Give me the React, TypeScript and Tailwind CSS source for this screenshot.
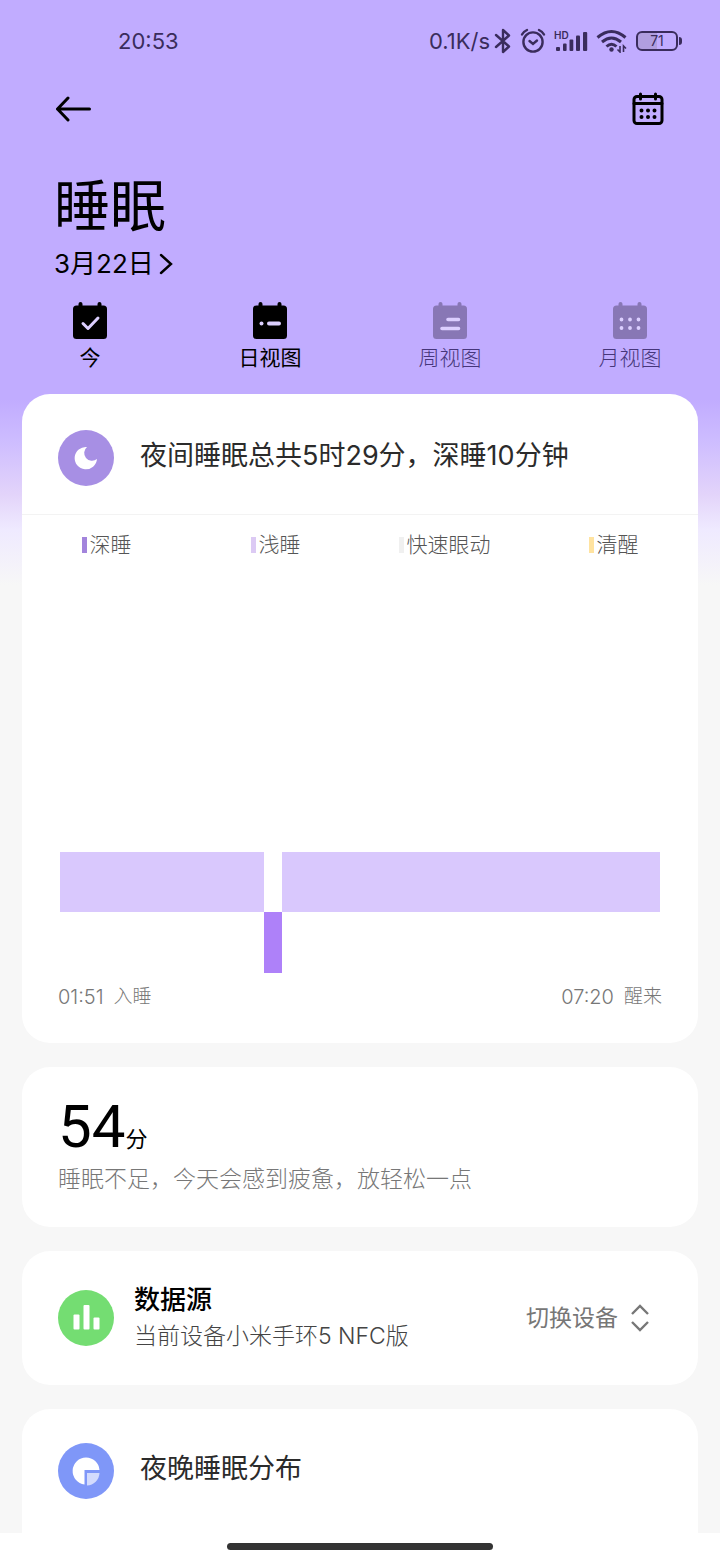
import React from 'react';

interface Tab {
  label: string;
  active: boolean;
  mark: React.ReactNode;
}

const TABS: Tab[] = [
  {
    label: '今',
    active: true,
    mark: <path d="M11 21.500l5 5 10-10.500" strokeWidth="3" />,
  },
  {
    label: '日视图',
    active: true,
    mark: (
      <>
        <path d="M9.5 21.5h.01" strokeWidth="4" />
        <path d="M17 21.5h10" strokeWidth="4" />
      </>
    ),
  },
  {
    label: '周视图',
    active: false,
    mark: <path d="M16 17.5h10.5M10 26.5h16.500" strokeWidth="3.6" />,
  },
  {
    label: '月视图',
    active: false,
    mark: (
      <path
        d="M9.500 17.500h.01M18 17.500h.01M26.500 17.500h.01M9.500 26h.01M18 26h.01M26.500 26h.01"
        strokeWidth="3.8"
      />
    ),
  },
];

const LEGEND = [
  { label: '深睡', color: 'bg-[#a284dc]' },
  { label: '浅睡', color: 'bg-[#dccaf4]' },
  { label: '快速眼动', color: 'bg-[#f0f0f0]' },
  { label: '清醒', color: 'bg-[#ffe3a0]' },
];

// start and length in minutes after falling asleep
const TOTAL_MINUTES = 329;
const STAGES = [
  { start: 0, length: 112, deep: false },
  { start: 112, length: 10, deep: true },
  { start: 122, length: 207, deep: false },
];

const StatusBar = () => (
  <div className="flex h-[82px] items-center justify-between pl-[118px] pr-[38px] text-[#3a2c5c]">
    <span className="text-[22px] leading-7">20:53</span>
    <div className="flex items-center gap-2">
      <div className="flex items-center gap-1">
        <span className="text-[22px] leading-7">0.1K/s</span>
        <svg width="18" height="26" viewBox="0 0 18 26" fill="none" stroke="currentColor" strokeWidth="2.4" strokeLinejoin="round" strokeLinecap="round">
          <path d="M2 7l13 11.500L9 24V2l6 5.500L2 19" />
        </svg>
      </div>
      <svg width="26" height="26" viewBox="0 0 26 26" fill="none" stroke="currentColor" strokeWidth="2.4" strokeLinecap="round">
        <circle cx="13" cy="14" r="9.600" />
        <path d="M9.500 13l3.500 3 4-3.500M2 6.500Q3.500 3.500 7 2M24 6.500Q22.500 3.500 19 2" />
      </svg>
      <div className="relative h-6 w-[34px]">
        <span className="absolute left-0 top-0 text-[10px] font-semibold leading-3">HD</span>
        <svg className="h-6 w-full" viewBox="0 0 34 24" fill="currentColor">
          <rect x="2" y="18" width="4" height="4" rx="1" />
          <rect x="9" y="14.500" width="3.600" height="7.500" rx="1" />
          <rect x="15.500" y="10.500" width="3.800" height="11.500" rx="1" />
          <rect x="22" y="6.500" width="4" height="15.500" rx="1" />
          <rect x="29" y="3" width="4.200" height="19" rx="1" />
        </svg>
      </div>
      <svg width="32" height="24" viewBox="0 0 32 24" fill="none" stroke="currentColor" strokeWidth="3">
        <path d="M1.500 8.500Q15.500-3.500 29.500 8.500M6 13Q15.500 5 25 13M10.500 17.500Q15.500 13 20.500 17.500" />
        <circle cx="15.500" cy="20.500" r="2.200" fill="currentColor" stroke="none" />
        <path d="M24 17v6l-2.500-2.500M27.500 23v-6l2.500 2.500" strokeWidth="1.600" />
      </svg>
      <div className="flex items-center gap-px">
        <span className="flex h-5 w-[42px] items-center justify-center rounded-md border-2 border-current bg-linear-to-r from-[#b09edf] from-50% to-transparent to-50% text-[14px] leading-4">
          71
        </span>
        <span className="h-2 w-[3px] rounded-r bg-current" />
      </div>
    </div>
  </div>
);

const CalendarIcon = () => (
  <svg width="32" height="34" viewBox="0 0 32 34" fill="none" stroke="currentColor" strokeWidth="3" strokeLinecap="round">
    <rect x="2" y="4.500" width="28" height="27" rx="3" />
    <path d="M2 11.500h28M8.500 2v5M23.500 2v5" />
    <path d="M9.500 18.500h.01M16 18.500h.01M22.500 18.500h.01M9.500 25h.01M16 25h.01M22.500 25h.01" strokeWidth="4" />
  </svg>
);

const TabIcon = ({ children }: { children: React.ReactNode }) => (
  <svg width="36" height="38" viewBox="0 0 36 38" fill="none" strokeLinecap="round" strokeLinejoin="round">
    <rect x="1" y="3.500" width="34" height="33.500" rx="3.500" fill="currentColor" />
    <path d="M8.500 2v4M27.500 2v4" stroke="currentColor" strokeWidth="4" />
    <g stroke="#dccfff">{children}</g>
  </svg>
);

const RoundIcon = ({ color, children }: { color: string; children: React.ReactNode }) => (
  <span className={`flex size-14 shrink-0 items-center justify-center rounded-full ${color}`}>
    <svg width="56" height="56" viewBox="0 0 56 56" fill="#fff">
      {children}
    </svg>
  </span>
);

const SleepChart = () => (
  <div className="relative mx-[38px] mt-[293px] h-[121px]">
    {STAGES.map((stage) => (
      <div
        key={stage.start}
        className={`absolute ${stage.deep ? 'bottom-0 h-[61px] bg-[#ae81f9]' : 'top-0 h-[60px] bg-[#d9c8fd]'}`}
        style={{
          left: `${(stage.start / TOTAL_MINUTES) * 100}%`,
          width: `${(stage.length / TOTAL_MINUTES) * 100}%`,
        }}
      />
    ))}
  </div>
);

export default function App() {
  return (
    <div className="flex min-h-screen flex-col bg-[#f7f7f7] bg-[linear-gradient(to_bottom,#c1acff_0px,#c1acff_400px,#cdbcff_440px,#e3d4fa_495px,#efeaff_530px,#f7f7f7_585px)] font-[Inter,'Noto_Sans_CJK_SC',sans-serif] text-black">
      <StatusBar />

      <header>
        <div className="flex h-[54px] items-center justify-between px-14">
          <button aria-label="返回">
            <svg width="36" height="26" viewBox="0 0 36 26" fill="none" stroke="currentColor" strokeWidth="3" strokeLinecap="round" strokeLinejoin="round">
              <path d="M12 2L1.500 13 12 24M1.500 13h32" />
            </svg>
          </button>
          <button aria-label="日历">
            <CalendarIcon />
          </button>
        </div>
        <h1 className="mt-[38px] px-[54px] text-[56px] leading-[64px]">睡眠</h1>
        <button className="mx-[54px] mt-2.5 flex items-center gap-1 text-[26px] leading-8">
          3月22日
          <svg width="16" height="22" viewBox="0 0 16 22" fill="none" stroke="currentColor" strokeWidth="2.400" strokeLinecap="round">
            <path d="M3 2l10 9-10 9" />
          </svg>
        </button>
      </header>

      <nav className="mt-[22px] grid grid-cols-4">
        {TABS.map((tab) => (
          <button
            key={tab.label}
            className={`flex flex-col items-center gap-1 ${tab.active ? 'text-black' : 'text-[#8877b5]'}`}
          >
            <TabIcon>{tab.mark}</TabIcon>
            <span className={`text-[21px] leading-7 ${tab.active ? 'text-black' : 'font-light text-[#46367a]'}`}>
              {tab.label}
            </span>
          </button>
        ))}
      </nav>

      <main className="mt-[22px] flex grow flex-col gap-6 px-[22px]">
        <section className="rounded-[28px] bg-white pb-8">
          <div className="flex h-[121px] items-center gap-[26px] border-b border-[#f3f3f3] px-9 pt-2">
            <RoundIcon color="bg-[#a78fe4]">
              <path d="M29 17A11.200 11.200 0 1 0 39 29A7.600 7.600 0 0 1 29 17Z" />
            </RoundIcon>
            <h2 className="pb-1 text-[27px] leading-10 text-[#2b2b2b]">夜间睡眠总共5时29分，深睡10分钟</h2>
          </div>
          <ul className="mt-4 grid grid-cols-4 text-[21px] font-light leading-7 text-[#555]">
            {LEGEND.map((item) => (
              <li key={item.label} className="flex items-center justify-center gap-[3px]">
                <span className={`h-4 w-[5px] ${item.color}`} />
                {item.label}
              </li>
            ))}
          </ul>
          <SleepChart />
          <div className="mt-2.5 flex justify-between px-9 text-[19px] font-light leading-7 text-[#777]">
            <span className="flex gap-2.5">
              <span className="text-[20px]">01:51</span>
              <span>入睡</span>
            </span>
            <span className="flex gap-2.5">
              <span className="text-[20px]">07:20</span>
              <span>醒来</span>
            </span>
          </div>
        </section>

        <section className="rounded-[28px] bg-white px-9 pb-8 pt-7">
          <p className="flex items-baseline">
            <span className="font-[Roboto,sans-serif] text-[60px] leading-[64px]">54</span>
            <span className="text-[22px] leading-6">分</span>
          </p>
          <p className="mt-1 text-[23px] font-light leading-8 text-[#777]">睡眠不足，今天会感到疲惫，放轻松一点</p>
        </section>

        <section className="flex h-[134px] items-center rounded-[28px] bg-white px-9">
          <RoundIcon color="bg-[#74dd72]">
            <rect x="15.500" y="24.500" width="6" height="15" rx="1" />
            <rect x="25.500" y="15" width="6" height="24.500" rx="1" />
            <rect x="35.500" y="27.500" width="6" height="12" rx="1" />
          </RoundIcon>
          <div className="ml-5 grow">
            <h2 className="text-[26px] font-medium leading-9">数据源</h2>
            <p className="text-[23px] font-light leading-9 text-[#444]">当前设备小米手环5 NFC版</p>
          </div>
          <button className="mr-3 flex items-center gap-3 text-[23px] leading-8 text-[#777]">
            切换设备
            <svg width="20" height="28" viewBox="0 0 20 28" fill="none" stroke="currentColor" strokeWidth="2.400">
              <path d="M2 10l8-8 8 8M2 18l8 8 8-8" />
            </svg>
          </button>
        </section>

        <section className="flex grow items-center gap-[26px] rounded-t-[28px] bg-white px-9 py-[34px]">
          <RoundIcon color="bg-[#7f97f8]">
            <path d="M28 14.500A13.500 13.500 0 0 1 41.500 27H26.500v14.400A13.500 13.500 0 0 1 28 14.500Z" />
            <path d="M29 30h12.500A13 13 0 0 1 29 42.500Z" fill="#d3dbfd" />
          </RoundIcon>
          <h2 className="pb-1 text-[27px] leading-10 text-[#2b2b2b]">夜晚睡眠分布</h2>
        </section>
      </main>

      <footer className="flex h-7 justify-center bg-white pt-2.5">
        <span className="h-[7px] w-[37%] rounded-full bg-[#333]" />
      </footer>
    </div>
  );
}
